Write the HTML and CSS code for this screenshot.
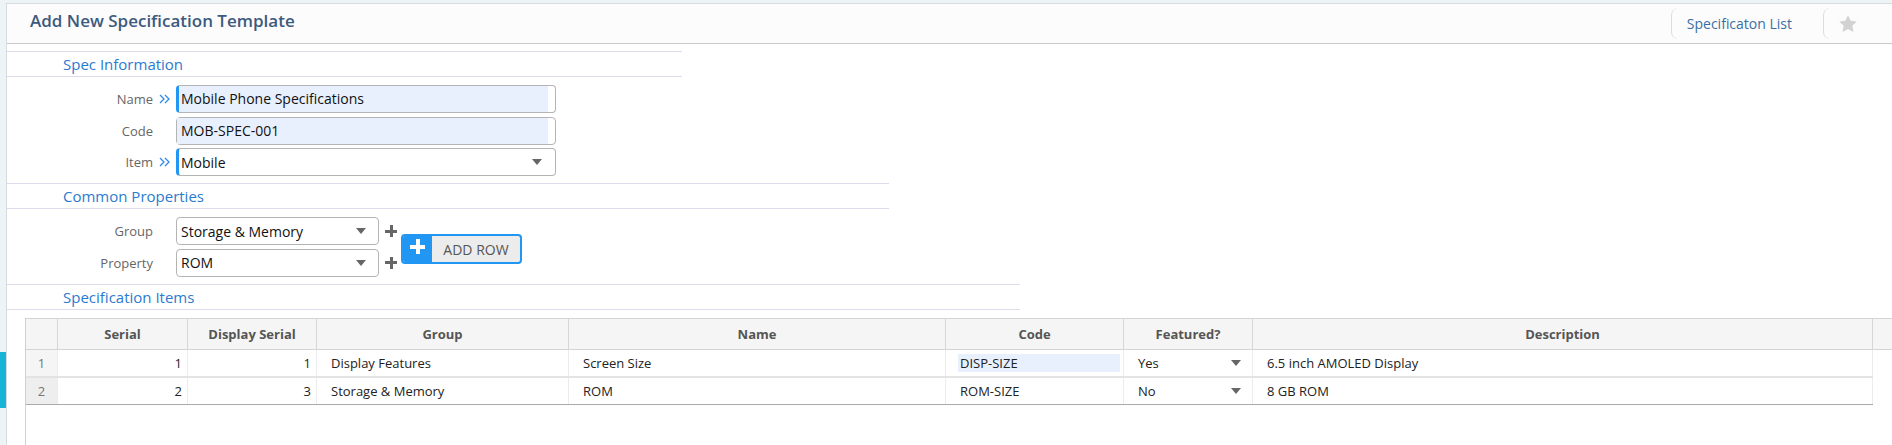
FILE: index.html
```html
<!DOCTYPE html>
<html lang="en">
<head>
  <meta charset="UTF-8">
  <title>Add New Specification Template</title>
  <link rel="stylesheet" href="styles.css">
</head>
<body>
  <div class="side-tab"></div>

  <div class="page">
    <div class="page-header">
      <h1 class="page-title">Add New Specification Template</h1>
      <div class="header-actions">
        <a class="header-btn">Specificaton List</a>
        <a class="header-btn star-btn">
          <svg width="20" height="20" viewBox="0 0 24 24"><polygon points="12,1.5 15.2,8.1 22.5,9.1 17.2,14.2 18.5,21.5 12,18 5.5,21.5 6.8,14.2 1.5,9.1 8.8,8.1" fill="#d2d2d2"/></svg>
        </a>
      </div>
    </div>

    <div class="section-title section-spec first">Spec Information</div>
    <div class="form-block">
      <div class="form-row">
        <label class="form-label">Name</label>
        <span class="req-mark"><svg width="11" height="10" viewBox="0 0 11 10"><polyline points="1,1 5,5 1,9" /><polyline points="6,1 10,5 6,9" /></svg></span>
        <div class="field required"><span class="field-fill">Mobile Phone Specifications</span></div>
      </div>
      <div class="form-row">
        <label class="form-label">Code</label>
        <span class="req-mark"></span>
        <div class="field"><span class="field-fill">MOB-SPEC-001</span></div>
      </div>
      <div class="form-row">
        <label class="form-label">Item</label>
        <span class="req-mark"><svg width="11" height="10" viewBox="0 0 11 10"><polyline points="1,1 5,5 1,9" /><polyline points="6,1 10,5 6,9" /></svg></span>
        <div class="field required select"><span class="field-text">Mobile</span><span class="caret"></span></div>
      </div>
    </div>

    <div class="section-title section-common">Common Properties</div>
    <div class="prop-block">
      <div class="prop-rows">
        <div class="form-row">
          <label class="form-label">Group</label>
          <span class="req-mark"></span>
          <div class="field select small"><span class="field-text">Storage &amp; Memory</span><span class="caret"></span></div>
          <span class="plus-icon"></span>
        </div>
        <div class="form-row">
          <label class="form-label">Property</label>
          <span class="req-mark"></span>
          <div class="field select small"><span class="field-text">ROM</span><span class="caret"></span></div>
          <span class="plus-icon"></span>
        </div>
      </div>
      <button class="add-row-btn" type="button">
        <span class="add-icon"><span class="plus-white"></span></span>
        <span class="add-text">ADD ROW</span>
      </button>
    </div>

    <div class="section-title section-items">Specification Items</div>
    <div class="grid-wrap">
      <div class="grid-head">
        <div class="hcell"></div>
        <div class="hcell">Serial</div>
        <div class="hcell">Display Serial</div>
        <div class="hcell">Group</div>
        <div class="hcell">Name</div>
        <div class="hcell">Code</div>
        <div class="hcell">Featured?</div>
        <div class="hcell">Description</div>
        <div class="hcell last"></div>
      </div>
      <div class="grid-row">
        <div class="cell rownum">1</div>
        <div class="cell num">1</div>
        <div class="cell num">1</div>
        <div class="cell">Display Features</div>
        <div class="cell">Screen Size</div>
        <div class="cell code-cell"><span class="cell-edit">DISP-SIZE</span></div>
        <div class="cell drop">Yes<span class="caret"></span></div>
        <div class="cell">6.5 inch AMOLED Display</div>
      </div>
      <div class="grid-row last-row">
        <div class="cell rownum alt">2</div>
        <div class="cell num">2</div>
        <div class="cell num">3</div>
        <div class="cell">Storage &amp; Memory</div>
        <div class="cell">ROM</div>
        <div class="cell">ROM-SIZE</div>
        <div class="cell drop">No<span class="caret"></span></div>
        <div class="cell">8 GB ROM</div>
      </div>
    </div>
  </div>
</body>
</html>
```

FILE: styles.css
```css
body {
  margin: 0;
  background: #eef4f6;
  font-family: "Open Sans", "Noto Sans", sans-serif;
  color: #222;
  overflow: hidden;
}
.side-tab {
  position: absolute;
  left: 0;
  top: 352px;
  width: 6px;
  height: 56px;
  background: #17b4d6;
}
.page {
  margin: 3px 0 0 6px;
  min-height: 460px;
  background: #fff;
  border-top: 1px solid #d5dde1;
  border-left: 1px solid #d5dde1;
}
.page-header {
  height: 39px;
  background: #fcfcfc;
  border-bottom: 1px solid #c9c9c9;
  display: flex;
  justify-content: space-between;
}
.page-title {
  margin: 0 0 0 23px;
  line-height: 34px;
  font-size: 17px;
  font-weight: 600;
  color: #3c5a7e;
}
.header-actions {
  display: flex;
  height: 31px;
  margin-top: 4px;
}
.header-btn {
  display: flex;
  align-items: center;
  padding: 0 31px 0 15px;
  border-left: 1px solid #dcdcdc;
  border-radius: 7px 0 0 7px;
  font-size: 14px;
  color: #3a6ea5;
  cursor: pointer;
}
.star-btn {
  padding: 0 34px 0 14px;
}

.section-title {
  box-sizing: border-box;
  height: 26px;
  line-height: 24px;
  padding-left: 56px;
  border-top: 1px solid #dcdcec;
  border-bottom: 1px solid #dcdcec;
  font-size: 15px;
  color: #2a7bd0;
}
.section-title.first {
  margin-top: 7px;
}
.section-spec {
  width: 675px;
}
.section-common {
  width: 882px;
}
.section-items {
  width: 1013px;
}

.form-block {
  display: flex;
  flex-direction: column;
  gap: 3.5px;
  padding: 8px 0 7px;
}
.form-row {
  display: flex;
  align-items: center;
  height: 28px;
}
.form-label {
  width: 146px;
  text-align: right;
  font-size: 13px;
  color: #666;
}
.req-mark {
  width: 23px;
  display: flex;
  padding-left: 6px;
  box-sizing: border-box;
}
.req-mark polyline {
  fill: none;
  stroke: #2f8ae8;
  stroke-width: 1.3;
}
.field {
  box-sizing: border-box;
  width: 380px;
  height: 28px;
  display: flex;
  align-items: center;
  border: 1px solid #b4b4b4;
  border-radius: 4px;
  font-size: 14px;
  color: #111;
}
.field.required {
  border-left: 3px solid #2196f3;
}
.field-fill {
  flex: 1;
  align-self: stretch;
  margin-right: 7px;
  padding-left: 4px;
  line-height: 26px;
  background: #e8f0fe;
}
.required .field-fill {
  padding-left: 2px;
}
.field-text {
  flex: 1;
  padding-left: 4px;
}
.required .field-text {
  padding-left: 2px;
}
.caret {
  width: 0;
  height: 0;
  border-left: 5px solid transparent;
  border-right: 5px solid transparent;
  border-top: 6px solid #666;
}
.select .caret {
  margin-right: 13px;
}
.field.small {
  width: 203px;
}
.select.small .caret {
  margin-right: 12px;
}
.plus-icon {
  position: relative;
  width: 12px;
  height: 12px;
  margin-left: 6px;
}
.plus-icon::before,
.plus-icon::after {
  content: "";
  position: absolute;
  background: #666;
}
.plus-icon::before {
  left: 0;
  top: 4.5px;
  width: 12px;
  height: 3px;
}
.plus-icon::after {
  left: 4.5px;
  top: 0;
  width: 3px;
  height: 12px;
}

.prop-block {
  display: flex;
  padding: 8px 0 7px;
}
.prop-rows {
  display: flex;
  flex-direction: column;
  gap: 3.5px;
}
.add-row-btn {
  display: flex;
  align-self: flex-start;
  margin: 17px 0 0 4px;
  padding: 0;
  width: 121px;
  height: 30px;
  border: 2px solid #2196f3;
  border-radius: 4px;
  overflow: hidden;
  background: #ececec;
  font-family: inherit;
  cursor: pointer;
}
.add-icon {
  width: 29px;
  height: 100%;
  background: #2196f3;
  display: flex;
  justify-content: center;
  padding-top: 3px;
  box-sizing: border-box;
}
.plus-white {
  position: relative;
  width: 15px;
  height: 15px;
}
.plus-white::before,
.plus-white::after {
  content: "";
  position: absolute;
  background: #fff;
}
.plus-white::before {
  left: 0;
  top: 5.5px;
  width: 15px;
  height: 4px;
}
.plus-white::after {
  left: 5.5px;
  top: 0;
  width: 4px;
  height: 15px;
}
.add-text {
  flex: 1;
  align-self: center;
  font-size: 14px;
  color: #555;
  text-align: center;
}

.grid-wrap {
  margin: 8px 0 0 18px;
  height: 140px;
  border-left: 1px solid #d0d0d0;
}
.grid-head,
.grid-row {
  display: grid;
  grid-template-columns: 32px 130px 129px 252px 377px 178px 129px 620px;
}
.grid-head {
  grid-template-columns: 32px 130px 129px 252px 377px 178px 129px 620px 1fr;
  height: 32px;
  box-sizing: border-box;
  background: #f5f5f5;
  border-top: 1px solid #d4d4d4;
  border-bottom: 1px solid #d4d4d4;
}
.hcell {
  border-right: 1px solid #d6d6d6;
  text-align: center;
  line-height: 30px;
  font-size: 13px;
  font-weight: 700;
  color: #555;
}
.hcell.last {
  border-right: none;
}
.grid-row {
  width: 1847px;
  height: 28px;
  box-sizing: border-box;
  border-bottom: 2px solid #e3e3e3;
}
.grid-row.last-row {
  height: 27px;
  border-bottom: 1px solid #a9a9a9;
}
.cell {
  display: flex;
  align-items: center;
  padding-left: 14px;
  border-right: 1px solid #ececec;
  font-size: 13px;
  color: #222;
  overflow: hidden;
  white-space: nowrap;
}
.cell.rownum {
  justify-content: center;
  padding-left: 0;
  background: #f5f5f5;
  color: #777;
}
.cell.rownum.alt {
  background: #eeeeee;
}
.cell.num {
  justify-content: flex-end;
  padding: 0 5px 0 0;
}
.code-cell {
  padding-left: 12px;
}
.cell-edit {
  flex: 1;
  margin-right: 3px;
  padding-left: 2px;
  line-height: 18px;
  background: #e8f0fe;
}
.cell.drop {
  justify-content: space-between;
  padding-right: 11px;
}
.cell.drop .caret {
  border-left-width: 5px;
  border-right-width: 5px;
}
```
